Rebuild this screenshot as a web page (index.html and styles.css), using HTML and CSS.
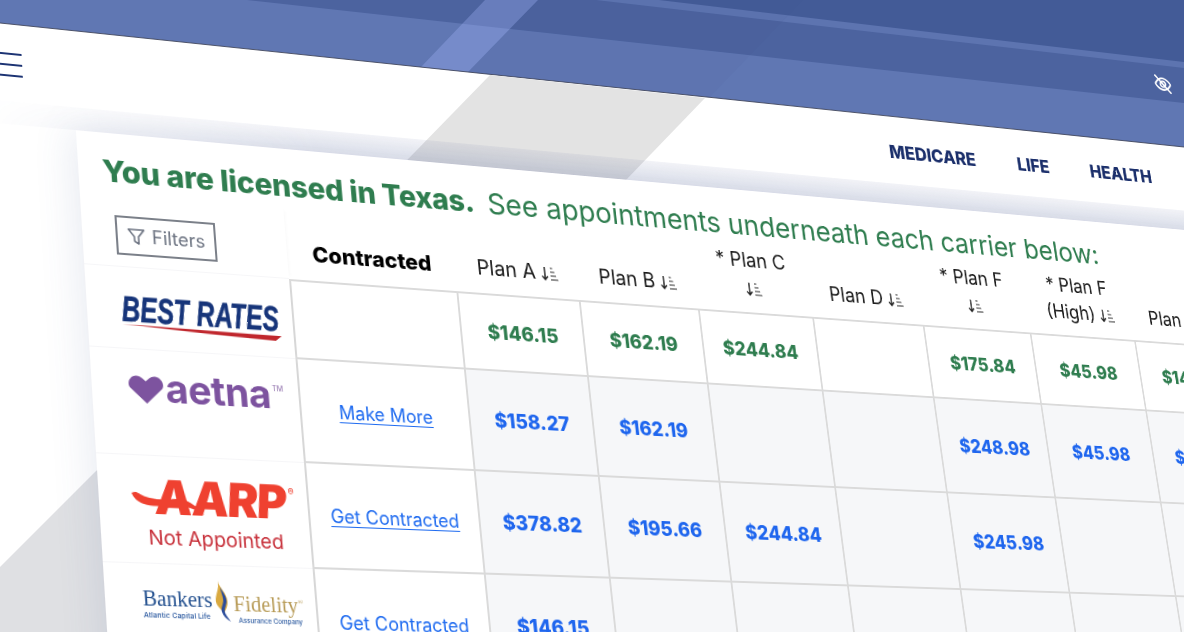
FILE: index.html
```html
<!DOCTYPE html>
<html lang="en">
<head>
<meta charset="utf-8">
<title>Medicare plans</title>
<link rel="stylesheet" href="styles.css">
</head>
<body>
<div class="stage">
  <svg class="backdrop" width="1184" height="632" viewBox="0 0 1184 632" aria-hidden="true">
    <polygon class="hero-base" points="0,0 1184,0 1184,147 0,23"/>
    <polygon class="hero-mid" points="247,0 1184,0 1184,103"/>
    <polygon class="hero-strip" points="596,0 1184,0 1184,68"/>
    <polygon class="hero-dark" points="659,0 1184,0 1184,62"/>
    <polygon class="hero-wedge" points="538,0 803,0 709,98 468,72"/>
    <polygon class="hero-stripe" points="485,0 538,0 468,72 421,67"/>
    <line class="hero-edge" x1="0" y1="23" x2="1184" y2="147"/>
    <polygon class="deco" points="490,75 705,98 520,290 300,270"/>
    <polygon class="deco-low" points="95,472 0,567 0,632 130,632 130,440"/>
  </svg>

  <div class="page">
    <div class="hero">
      <svg class="eye" width="24" height="24" viewBox="0 0 24 24" fill="none" stroke="#fff" stroke-width="2" stroke-linecap="round" stroke-linejoin="round" aria-hidden="true">
        <path d="M2 12s3.600-7 10-7 10 7 10 7-3.600 7-10 7-10-7-10-7z"/>
        <circle cx="12" cy="12" r="3.500"/>
        <line x1="3" y1="2" x2="21" y2="22"/>
      </svg>
    </div>

    <header class="topbar">
      <div class="burger"><span></span><span></span><span></span></div>
      <nav class="nav">
        <a>MEDICARE</a>
        <a>LIFE</a>
        <a>HEALTH</a>
      </nav>
    </header>

    <main class="main">
      <section class="card">
        <h1 class="title"><strong>You are licensed in Texas.</strong><span>See appointments underneath each carrier below:</span></h1>

        <div class="grid">
          <div class="side side-head">
            <button class="filter">
              <svg width="18" height="18" viewBox="0 0 18 18" fill="none" stroke="#6b7280" stroke-width="1.500" stroke-linejoin="round" aria-hidden="true"><path d="M1.500 2h15l-5.500 7v7l-4-2.500V9z"/></svg>
              Filters
            </button>
          </div>
          <div class="th th-bold">Contracted</div>
          <div class="th">Plan A <svg class="sort" viewBox="0 0 18 16"><use href="#sort"/></svg></div>
          <div class="th">Plan B <svg class="sort" viewBox="0 0 18 16"><use href="#sort"/></svg></div>
          <div class="th">* Plan C<br><svg class="sort" viewBox="0 0 18 16"><use href="#sort"/></svg></div>
          <div class="th">Plan D <svg class="sort" viewBox="0 0 18 16"><use href="#sort"/></svg></div>
          <div class="th">* Plan F<br><svg class="sort" viewBox="0 0 18 16"><use href="#sort"/></svg></div>
          <div class="th">* Plan F<br>(High) <svg class="sort" viewBox="0 0 18 16"><use href="#sort"/></svg></div>
          <div class="th">Plan G <svg class="sort" viewBox="0 0 18 16"><use href="#sort"/></svg></div>

          <div class="side logo-best">
            <div class="best-text">BEST RATES</div>
            <div class="best-swoosh"></div>
          </div>
          <div class="td td-first td-left"></div>
          <div class="td td-first green">$146.15</div>
          <div class="td td-first green">$162.19</div>
          <div class="td td-first green">$244.84</div>
          <div class="td td-first"></div>
          <div class="td td-first green">$175.84</div>
          <div class="td td-first green">$45.98</div>
          <div class="td td-first green">$146.15</div>

          <div class="side logo-aetna">
            <svg class="heart" width="33" height="28" viewBox="0 0 33 28" aria-hidden="true"><path d="M16.500 27 1.500 12.500C-.5 10.500-.5 6 2 3.500 5-.500 10 0 13 2.500l3.500 3 3.500-3C23 0 28-.500 31 3.500c2.500 2.500 2.500 7 .500 9z"/></svg>
            <span class="aetna-text">aetna</span><span class="tm">TM</span>
          </div>
          <div class="td td-left"><a class="link">Make More</a></div>
          <div class="td shade blue">$158.27</div>
          <div class="td shade blue">$162.19</div>
          <div class="td shade"></div>
          <div class="td shade"></div>
          <div class="td shade blue">$248.98</div>
          <div class="td shade blue">$45.98</div>
          <div class="td shade blue">$146.15</div>

          <div class="side logo-aarp">
            <div class="aarp-mark">
              <svg class="aarp-swoosh" width="70" height="26" viewBox="0 0 70 26" aria-hidden="true"><path d="M0 4c5-3 7 1 13 3 10 3 18 2 30 1 9 0 16 4 25 14-9-5-17-8-25-8-12 1-22 3-32 0C5 12 2 9 0 4z"/></svg>
              <span class="aarp-text">AARP</span><span class="aarp-reg">®</span>
            </div>
            <div class="not-appointed">Not Appointed</div>
          </div>
          <div class="td td-left"><a class="link">Get Contracted</a></div>
          <div class="td shade blue">$378.82</div>
          <div class="td shade blue">$195.66</div>
          <div class="td shade blue">$244.84</div>
          <div class="td shade"></div>
          <div class="td shade blue">$245.98</div>
          <div class="td shade"></div>
          <div class="td shade"></div>

          <div class="side logo-bankers">
            <div class="bf-col">
              <span class="bf-name bf-blue">Bankers</span>
              <span class="bf-sub">Atlantic Capital Life</span>
            </div>
            <svg class="flame" width="16" height="38" viewBox="0 0 16 38" aria-hidden="true">
              <path class="flame-gold" d="M4 0c1 7 8 11 8 19 0 6-3 9-4 11-3-4-8-7-7-13C2 11 5 7 4 0z"/>
              <path class="flame-blue" d="M6 6c2 5 6 9 5 14-1 4-3 7-2 10 1 3 3 5 5 8-4-2-7-5-8-9-1-4 2-7 2-11 0-4-2-8-2-12z"/>
            </svg>
            <div class="bf-col">
              <span class="bf-name bf-gold">Fidelity<sup>®</sup></span>
              <span class="bf-sub bf-sub-right">Assurance Company</span>
            </div>
          </div>
          <div class="td td-left"><a class="link">Get Contracted</a></div>
          <div class="td shade blue">$146.15</div>
          <div class="td shade"></div>
          <div class="td shade"></div>
          <div class="td shade"></div>
          <div class="td shade"></div>
          <div class="td shade"></div>
          <div class="td shade"></div>
        </div>
      </section>
    </main>
  </div>

  <svg class="defs" width="0" height="0" aria-hidden="true">
    <symbol id="sort" viewBox="0 0 18 16">
      <path d="M4 1v13M1 10.500 4 14l3-3.500" fill="none" stroke="#222" stroke-width="1.500"/>
      <path d="M10 2h2.500M10 6h4.500M10 10h6M10 14h8" fill="none" stroke="#222" stroke-width="1.200"/>
    </symbol>
  </svg>
</div>
</body>
</html>
```

FILE: styles.css
```css
* { box-sizing: border-box; }

html, body {
  margin: 0;
  padding: 0;
  height: 100%;
  overflow: hidden;
  background: #fff;
  font-family: Inter, "Liberation Sans", sans-serif;
}

.stage {
  position: relative;
  width: 1184px;
  height: 632px;
  overflow: hidden;
}

.backdrop { position: absolute; left: 0; top: 0; }
.defs { position: absolute; }

.hero-base { fill: #6077b3; }
.hero-mid { fill: #4c639f; }
.hero-strip { fill: #5d74b0; }
.hero-dark { fill: #435b97; }
.hero-wedge { fill: #34498a; opacity: .05; }
.hero-stripe { fill: #a8bbff; opacity: .3; }
.hero-edge { stroke: #3d4257; stroke-width: 1; opacity: .85; }
.deco { fill: #e3e3e3; }
.deco-low { fill: #dfe0e3; }

.page {
  position: absolute;
  left: 0;
  top: 0;
  width: 1500px;
  height: 820px;
  display: flex;
  flex-direction: column;
  transform-origin: 0 0;
  transform: matrix3d(
    1.035286, 0.110038, 0, 0.000136753,
    0.054021, 0.968197, 0, -0.0000930211,
    0, 0, 1, 0,
    -45.895, -189.7, 0, 1.000833
  );
}

.hero {
  height: 217px;
  flex: none;
  padding: 132px 0 0 1342px;
}
.eye { display: block; }

.topbar {
  height: 77px;
  flex: none;
  display: flex;
  align-items: center;
  justify-content: space-between;
  padding: 3px 182px 0 22px;
}

.burger {
  width: 30px;
  height: 24px;
  display: flex;
  flex-direction: column;
  justify-content: space-between;
}
.burger span { display: block; height: 2px; background: #1c3373; }

.nav { display: flex; gap: 52px; }
.nav a {
  font-size: 20.200px;
  font-weight: 800;
  letter-spacing: -.1px;
  color: #1b2f6b;
}

.main {
  position: relative;
  flex: 1;
  min-height: 0;
  overflow: hidden;
  padding: 23px 0 0 100px;
}
.main::before {
  content: "";
  position: absolute;
  left: 0;
  top: 0;
  width: 100%;
  height: 23px;
  background: linear-gradient(rgba(80, 95, 150, .06), rgba(80, 95, 150, .17));
  -webkit-mask-image: linear-gradient(to right, transparent 10px, #000 340px);
  mask-image: linear-gradient(to right, transparent 10px, #000 340px);
}

.card {
  position: relative;
  background: #fff;
  height: 800px;
  box-shadow: -4px 0 36px rgba(70, 90, 150, .13);
}

.title {
  margin: 0;
  height: 61px;
  padding: 20px 0 0 23px;
  font-size: 30px;
  line-height: 36px;
  font-weight: 400;
  color: #2f7d4f;
  white-space: nowrap;
  display: flex;
  gap: 14px;
}
.title strong { font-weight: 800; letter-spacing: -.2px; }
.title span { font-size: 30.300px; }

.grid {
  display: grid;
  grid-template-columns: 200px 174px repeat(7, 131.3px);
  grid-template-rows: 72px 80px 102px 102px 102px;
}

.th {
  display: block;
  align-self: end;
  text-align: center;
  padding-bottom: 11px;
  font-size: 21px;
  line-height: 30px;
  color: #1a1a1a;
}
.th-bold { font-size: 22px; font-weight: 800; color: #000; padding-bottom: 12px; }
.sort { width: 18px; height: 16px; vertical-align: -2px; }

.side {
  position: relative;
  background: #fff;
  border-bottom: 1px solid #f6f6f8;
  box-shadow: 3px 0 5px -3px rgba(0, 0, 0, .04);
}
.side-head { padding: 21px 0 0 32px; }

.filter {
  width: 98px;
  height: 39px;
  padding: 0 0 0 9px;
  background: #fff;
  border: 2px solid #7b8089;
  display: flex;
  align-items: center;
  gap: 6px;
  font-family: inherit;
  font-size: 18px;
  color: #6b7280;
}

.td {
  display: flex;
  align-items: center;
  justify-content: center;
  border-right: 2px solid #dadada;
  border-bottom: 2px solid #dadada;
  font-size: 20px;
  font-weight: 800;
}
.td-first { border-top: 2px solid #dadada; }
.td-left { border-left: 2px solid #dadada; }
.shade { background: #f6f7f9; }
.green { color: #2f7d4f; }
.blue { color: #1f66ee; }

.link {
  font-size: 18px;
  font-weight: 400;
  color: #1f6bf0;
  text-decoration: underline;
  text-underline-offset: 3px;
}

/* Carrier logos */
.logo-best { padding: 27px 0 0 33px; overflow: hidden; }
.best-text {
  width: 153px;
  font-family: "Liberation Sans", sans-serif;
  font-size: 35px;
  line-height: 28px;
  font-weight: 700;
  font-style: italic;
  color: #17357a;
  white-space: nowrap;
  -webkit-text-stroke: .6px #17357a;
  transform-origin: 0 0;
  transform: scaleX(.7);
}
.best-swoosh {
  width: 155px;
  height: 7px;
  margin-top: 1px;
  background: #c0272d;
  clip-path: polygon(0 0, 100% 30%, 96% 100%, 55% 65%);
}

.logo-aetna {
  padding: 16px 0 0 35px;
  display: flex;
  align-items: flex-start;
  gap: 2px;
}
.heart { fill: #7d539f; margin-top: 9px; flex: none; }
.aetna-text {
  font-size: 38px;
  line-height: 40px;
  font-weight: 700;
  letter-spacing: -.4px;
  color: #7d539f;
}
.tm { font-size: 7px; color: #8b6aa8; margin-top: 10px; }

.logo-aarp {
  padding: 18px 0 0 18px;
  display: flex;
  flex-direction: column;
  align-items: center;
}
.aarp-mark { position: relative; padding-left: 22px; display: flex; }
.aarp-swoosh { position: absolute; left: 0; top: 14px; fill: #ef4130; }
.aarp-text {
  font-size: 45px;
  line-height: 42px;
  font-weight: 900;
  letter-spacing: -1.500px;
  color: #ef4130;
  transform: skewX(-6deg);
}
.aarp-reg { font-size: 9px; color: #ef4130; margin: 5px 0 0 3px; }
.not-appointed { margin-top: 6px; font-size: 19px; color: #c8323c; white-space: nowrap; }

.logo-bankers {
  padding: 14px 0 0 35px;
  display: flex;
  align-items: flex-start;
  gap: 2px;
}
.bf-col { display: flex; flex-direction: column; padding-top: 7px; }
.bf-name {
  font-family: "Liberation Serif", serif;
  font-size: 20px;
  line-height: 22px;
}
.bf-name sup { font-size: 7px; }
.bf-blue { color: #23508f; }
.bf-gold { color: #b79a55; }
.bf-sub { font-size: 6.800px; font-weight: 500; line-height: 10px; color: #2c5aa0; white-space: nowrap; }
.bf-sub-right { font-size: 6.200px; margin-left: 4px; }
.flame { flex: none; }
.flame-gold { fill: #d9a93f; }
.flame-blue { fill: #2b4c9b; }
```
